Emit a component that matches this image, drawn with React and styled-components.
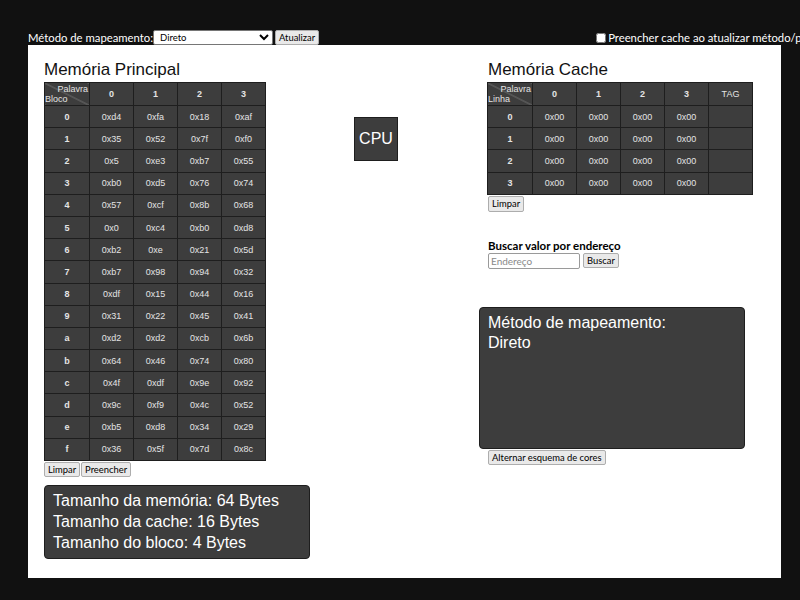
import React from "react";
import styled, { createGlobalStyle } from "styled-components";

const memory = [
  ["0xd4", "0xfa", "0x18", "0xaf"],
  ["0x35", "0x52", "0x7f", "0xf0"],
  ["0x5", "0xe3", "0xb7", "0x55"],
  ["0xb0", "0xd5", "0x76", "0x74"],
  ["0x57", "0xcf", "0x8b", "0x68"],
  ["0x0", "0xc4", "0xb0", "0xd8"],
  ["0xb2", "0xe", "0x21", "0x5d"],
  ["0xb7", "0x98", "0x94", "0x32"],
  ["0xdf", "0x15", "0x44", "0x16"],
  ["0x31", "0x22", "0x45", "0x41"],
  ["0xd2", "0xd2", "0xcb", "0x6b"],
  ["0x64", "0x46", "0x74", "0x80"],
  ["0x4f", "0xdf", "0x9e", "0x92"],
  ["0x9c", "0xf9", "0x4c", "0x52"],
  ["0xb5", "0xd8", "0x34", "0x29"],
  ["0x36", "0x5f", "0x7d", "0x8c"],
];

const cache = [0, 1, 2, 3].map(() => ["0x00", "0x00", "0x00", "0x00"]);

const GlobalStyle = createGlobalStyle`
  html, body {
    margin: 0;
    background: #111111;
    overflow: hidden;
  }
  body {
    padding: 30px 0 0 28px;
    width: 800px;
    height: 600px;
    box-sizing: border-box;
    font-family: "Liberation Sans", Arial, sans-serif;
  }
`;

const Toolbar = styled.div`
  display: flex;
  align-items: center;
  height: 15px;
  white-space: nowrap;
  font-family: Lato, sans-serif;
  font-size: 11.3px;
  color: #ffffff;
  & > * {
    flex-shrink: 0;
  }
`;

const Label = styled.span`
  line-height: 15px;
`;

const Select = styled.select`
  width: 120px;
  height: 15px;
  padding: 0 0 0 2px;
  margin: 0 2px 0 0;
  font-family: Lato, sans-serif;
  font-size: 9.5px;
  border: 1px solid #767676;
  border-radius: 2px;
  background: #ffffff;
  color: #000;
`;

const Button = styled.button`
  flex-shrink: 0;
  height: ${(p) => p.$h || 15}px;
  padding: 0 3px;
  margin: 0 ${(p) => p.$mr || 0}px 0 0;
  font-family: Lato, sans-serif;
  font-size: 9.4px;
  line-height: 1;
  color: #000;
  background: #e9e9e9;
  border: 1px solid #adadad;
  border-radius: 2px;
`;

const CheckGroup = styled.label`
  display: flex;
  align-items: center;
  gap: 2px;
  margin-left: 277px;
`;

const Check = styled.input`
  width: 10px;
  height: 10px;
  margin: 0;
`;

const Panel = styled.main`
  display: flex;
  width: 753px;
  height: 533px;
  box-sizing: border-box;
  padding: 15px 0 0 16px;
  background: #ffffff;
`;

const Column = styled.section`
  display: flex;
  flex-direction: column;
  align-items: flex-start;
  width: ${(p) => p.$w}px;
`;

const Title = styled.h2`
  margin: 0 0 2px ${(p) => p.$ml || 0}px;
  font-size: 17px;
  font-weight: normal;
  line-height: 20px;
  color: #111;
`;

const Grid = styled.table`
  border-collapse: collapse;
  margin-left: ${(p) => p.$ml || 0}px;
  border: 1px solid #1e1e1e;
  font-size: 9px;
  color: #e4e4e4;
`;

const Cell = styled.td`
  width: ${(p) => (p.$first ? 44 : 43)}px;
  height: ${(p) => p.$h || 21.2}px;
  padding: 0;
  text-align: center;
  background: #3d3d3d;
  border: 1px solid #1e1e1e;
  font-weight: ${(p) => (p.$bold ? "bold" : "normal")};
`;

const Corner = styled.th`
  width: 44px;
  height: 22px;
  padding: 0;
  background: linear-gradient(
      to top right,
      transparent calc(50% - 0.6px),
      #8a8a8a 50%,
      transparent calc(50% + 0.6px)
    ),
    #3d3d3d;
  border: 1px solid #1e1e1e;
  font-weight: normal;
  font-size: 9px;
  line-height: 10px;
`;

const CornerTop = styled.span`
  display: block;
  text-align: right;
  padding-right: 1px;
`;

const CornerBottom = styled.span`
  display: block;
  text-align: left;
`;

const ButtonRow = styled.div`
  display: flex;
  margin: 1px 0 0 ${(p) => p.$ml || 0}px;
`;

const InfoBox = styled.div`
  width: 266px;
  box-sizing: border-box;
  margin-top: 8px;
  padding: 4px 8px 5px;
  background: #3d3d3d;
  border: 1px solid #1e1e1e;
  border-radius: 4px;
  color: #ffffff;
  font-size: 16px;
  line-height: 21px;
`;

const Middle = styled.div`
  padding: 57px 0 0 44px;
  width: 125px;
`;

const CpuBox = styled.div`
  display: flex;
  align-items: center;
  justify-content: center;
  width: 44px;
  height: 44px;
  box-sizing: border-box;
  background: #3d3d3d;
  border: 1px solid #1e1e1e;
  color: #ffffff;
  font-size: 16px;
`;

const SearchTitle = styled.h3`
  margin: 26px 0 0 9px;
  font-family: Lato, sans-serif;
  font-size: 11.5px;
  font-weight: bold;
  line-height: 15px;
  color: #000;
`;

const SearchRow = styled.div`
  display: flex;
  align-items: center;
  gap: 3px;
  margin-left: 9px;
`;

const NumberInput = styled.input`
  width: 92px;
  height: 16px;
  box-sizing: border-box;
  padding: 0 2px;
  font-family: Lato, sans-serif;
  font-size: 10px;
  border: 1px solid #9a9a9a;
  border-radius: 2px;
  &::placeholder {
    color: #8a8a8a;
  }
`;

const MethodBox = styled.div`
  width: 266px;
  height: 142px;
  box-sizing: border-box;
  margin-top: 38px;
  padding: 5px 8px;
  background: #3d3d3d;
  border: 1px solid #1e1e1e;
  border-radius: 4px;
  color: #ffffff;
  font-size: 16px;
  line-height: 20px;
`;

function DataTable({ rowLabel, rows, tag, ml }) {
  const cols = ["0", "1", "2", "3"];
  return (
    <Grid $ml={ml}>
      <thead>
        <tr>
          <Corner>
            <CornerTop>Palavra</CornerTop>
            <CornerBottom>{rowLabel}</CornerBottom>
          </Corner>
          {cols.map((c) => (
            <Cell as="th" key={c} $bold $h={22}>
              {c}
            </Cell>
          ))}
          {tag && (
            <Cell as="th" $h={22}>
              TAG
            </Cell>
          )}
        </tr>
      </thead>
      <tbody>
        {rows.map((r, i) => (
          <tr key={i}>
            <Cell $first $bold>
              {i.toString(16)}
            </Cell>
            {r.map((v, j) => (
              <Cell key={j}>{v}</Cell>
            ))}
            {tag && <Cell />}
          </tr>
        ))}
      </tbody>
    </Grid>
  );
}

export default function App() {
  return (
    <>
      <GlobalStyle />
      <Toolbar>
        <Label>Método de mapeamento:</Label>
        <Select defaultValue="direto">
          <option value="direto">Direto</option>
          <option value="associativo">Associativo</option>
        </Select>
        <Button>Atualizar</Button>
        <CheckGroup>
          <Check type="checkbox" />
          <span>Preencher cache ao atualizar método/política</span>
        </CheckGroup>
      </Toolbar>
      <Panel>
        <Column $w={266}>
          <Title>Memória Principal</Title>
          <DataTable rowLabel="Bloco" rows={memory} />
          <ButtonRow>
            <Button $mr={1}>Limpar</Button>
            <Button>Preencher</Button>
          </ButtonRow>
          <InfoBox>
            Tamanho da memória: 64 Bytes
            <br />
            Tamanho da cache: 16 Bytes
            <br />
            Tamanho do bloco: 4 Bytes
          </InfoBox>
        </Column>
        <Middle>
          <CpuBox>CPU</CpuBox>
        </Middle>
        <Column $w={276}>
          <Title $ml={9}>Memória Cache</Title>
          <DataTable rowLabel="Linha" rows={cache} tag ml={8} />
          <ButtonRow $ml={9}>
            <Button $h={16}>Limpar</Button>
          </ButtonRow>
          <SearchTitle>Buscar valor por endereço</SearchTitle>
          <SearchRow>
            <NumberInput type="number" placeholder="Endereço" />
            <Button>Buscar</Button>
          </SearchRow>
          <MethodBox>
            Método de mapeamento:
            <br />
            Direto
          </MethodBox>
          <ButtonRow $ml={9}>
            <Button>Alternar esquema de cores</Button>
          </ButtonRow>
        </Column>
      </Panel>
    </>
  );
}
